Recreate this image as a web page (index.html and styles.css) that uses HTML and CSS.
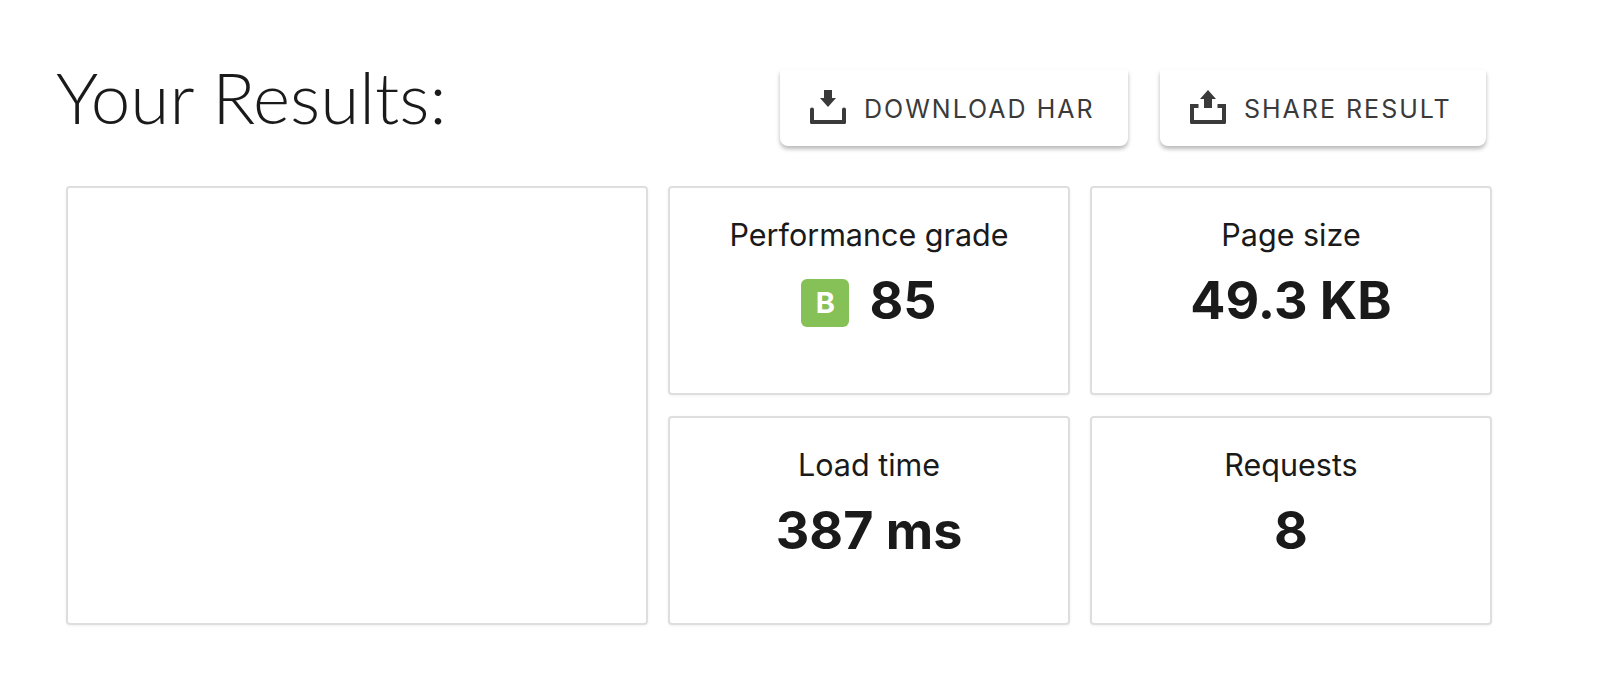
FILE: index.html
```html
<html>
    <head>
        <title>Your Results</title>
        <link rel="stylesheet" href="styles.css">
    </head>
    <body>
        <div class="results">
            <div class="results-head">
                <h1 class="titulo">Your Results:</h1>
                <div class="acciones">
                    <button class="boton boton-har">
                        <svg class="icono" viewBox="0 0 36 34">
                            <path d="M14 0h8v8h4L18 17 10 8h4z"/>
                            <path d="M0 19.500a2 2 0 0 1 4 0V30h28V19.500a2 2 0 0 1 4 0V32.500a1.500 1.500 0 0 1-1.500 1.500h-33A1.500 1.500 0 0 1 0 32.500z"/>
                        </svg>
                        DOWNLOAD HAR
                    </button>
                    <button class="boton boton-share">
                        <svg class="icono" viewBox="0 0 36 34">
                            <path d="M18 0l8 9h-4v9h-8V9h-4z"/>
                            <path d="M0 14h8.500v4H4v12h28V18h-4.500v-4H36V32.500a1.500 1.500 0 0 1-1.500 1.500h-33A1.500 1.500 0 0 1 0 32.500z"/>
                        </svg>
                        SHARE RESULT
                    </button>
                </div>
            </div>
            <div class="tablero">
                <div class="tarjeta tarjeta-grande"></div>
                <div class="tarjeta">
                    <div class="etiqueta">Performance grade</div>
                    <div class="valor"><span class="nota">B</span>85</div>
                </div>
                <div class="tarjeta">
                    <div class="etiqueta">Page size</div>
                    <div class="valor">49.3 KB</div>
                </div>
                <div class="tarjeta">
                    <div class="etiqueta">Load time</div>
                    <div class="valor">387 ms</div>
                </div>
                <div class="tarjeta">
                    <div class="etiqueta">Requests</div>
                    <div class="valor">8</div>
                </div>
            </div>
        </div>
    </body>
</html>
```

FILE: styles.css
```css
html{
    background-color: #ffffff;
}
body{
    margin: 0;
    font-family: "Inter", "Liberation Sans", sans-serif;
    color: #1a1a1a;
}
.results{
    padding-left: 56px;
    width: 1430px;
}
.results-head{
    display: flex;
    justify-content: space-between;
    height: 186px;
}
.titulo{
    margin: 51px 0 0 0;
    font-family: "Lato", sans-serif;
    font-weight: 300;
    font-size: 71px;
    line-height: 92px;
    height: 92px;
}
.acciones{
    display: flex;
    gap: 32px;
    padding-top: 70px;
    height: 76px;
}
.boton{
    display: flex;
    align-items: center;
    height: 76px;
    padding: 2px 0 0 30px;
    border: 0;
    border-radius: 0 0 8px 8px;
    background-color: #ffffff;
    box-shadow: 0 3px 4px rgba(0, 0, 0, 0.28);
    font-family: "Inter", sans-serif;
    font-size: 25px;
    letter-spacing: 2px;
    color: #3a3a3a;
    white-space: nowrap;
}
.boton-har{
    width: 348px;
}
.boton-share{
    width: 326px;
}
.icono{
    width: 36px;
    height: 34px;
    margin-right: 18px;
    margin-bottom: 4px;
    fill: #3a3a3a;
    flex-shrink: 0;
}
.tablero{
    display: grid;
    grid-template-columns: 582px 402px 402px;
    grid-template-rows: 209px 209px;
    gap: 21px 20px;
    margin-left: 10px;
}
.tarjeta{
    box-sizing: border-box;
    border: 2px solid #dedede;
    border-radius: 4px;
    box-shadow: 0 1px 3px rgba(0, 0, 0, 0.06);
    text-align: center;
    padding-top: 28px;
}
.tarjeta-grande{
    grid-row: 1 / 3;
}
.etiqueta{
    font-size: 30.5px;
    line-height: 38px;
}
.valor{
    display: flex;
    justify-content: center;
    align-items: center;
    margin-top: 15px;
    font-size: 52px;
    font-weight: 700;
    line-height: 64px;
}
.nota{
    display: flex;
    justify-content: center;
    align-items: center;
    width: 48px;
    height: 48px;
    margin-top: 4px;
    margin-right: 20px;
    border-radius: 6px;
    background-color: #86c158;
    color: #ffffff;
    font-size: 29px;
    font-weight: 700;
    line-height: 48px;
}
```
